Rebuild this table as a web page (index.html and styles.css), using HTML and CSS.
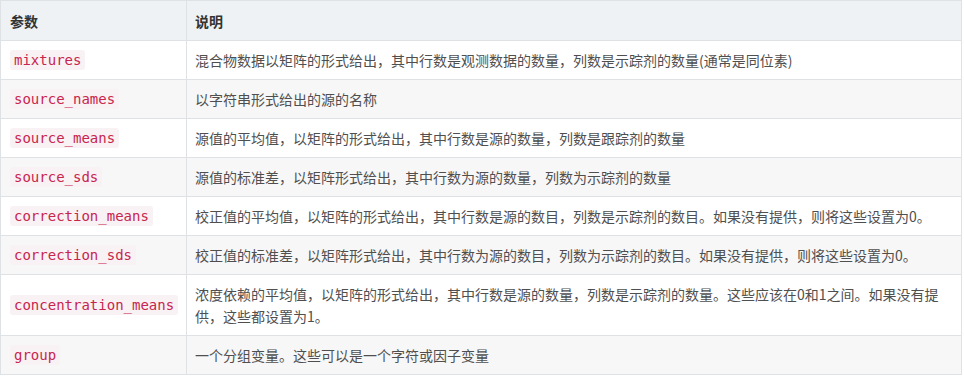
FILE: index.html
```html
<!DOCTYPE html>
<html lang="zh-CN">
<head>
<meta charset="utf-8">
<link rel="stylesheet" href="styles.css">
</head>
<body>
<table class="params">
  <colgroup><col class="c1"><col class="c2"></colgroup>
  <thead>
    <tr><th>参数</th><th>说明</th></tr>
  </thead>
  <tbody>
    <tr><td><code>mixtures</code></td><td>混合物数据以矩阵的形式给出，其中行数是观测数据的数量，列数是示踪剂的数量(通常是同位素)</td></tr>
    <tr><td><code>source_names</code></td><td>以字符串形式给出的源的名称</td></tr>
    <tr><td><code>source_means</code></td><td>源值的平均值，以矩阵的形式给出，其中行数是源的数量，列数是跟踪剂的数量</td></tr>
    <tr><td><code>source_sds</code></td><td>源值的标准差，以矩阵形式给出，其中行数为源的数量，列数为示踪剂的数量</td></tr>
    <tr><td><code>correction_means</code></td><td>校正值的平均值，以矩阵的形式给出，其中行数是源的数目，列数是示踪剂的数目。如果没有提供，则将这些设置为0。</td></tr>
    <tr><td><code>correction_sds</code></td><td>校正值的标准差，以矩阵形式给出，其中行数为源的数目，列数为示踪剂的数目。如果没有提供，则将这些设置为0。</td></tr>
    <tr><td><code>concentration_means</code></td><td>浓度依赖的平均值，以矩阵的形式给出，其中行数是源的数量，列数是示踪剂的数量。这些应该在0和1之间。如果没有提供，这些都设置为1。</td></tr>
    <tr><td><code>group</code></td><td>一个分组变量。这些可以是一个字符或因子变量</td></tr>
  </tbody>
</table>
</body>
</html>
```
FILE: styles.css
```css
html, body {
  margin: 0;
  padding: 0;
  background: #fff;
}
body {
  font-family: "Noto Sans CJK SC", "Microsoft YaHei", "Noto Sans", sans-serif;
  font-size: 14px;
  line-height: 22px;
  color: #4f4f4f;
}
.params {
  border-collapse: collapse;
  table-layout: fixed;
  width: 962px;
}
.c1 { width: 186px; }
.params th,
.params td {
  border: 1px solid #dfe2e5;
  padding: 8px 8px;
  height: 22px;
  text-align: left;
  vertical-align: middle;
  box-sizing: content-box;
}
.params th {
  background: #eff2f5;
  color: #333;
  font-weight: bold;
  padding-top: 9px;
}
.params th:first-child,
.params td:first-child {
  padding-left: 9px;
}
.params tbody tr:nth-child(even) td {
  background: #f7f7f7;
}
.params code {
  display: inline-block;
  vertical-align: top;
  margin-top: 1px;
  font-family: "DejaVu Sans Mono", "Liberation Mono", monospace;
  font-size: 14px;
  line-height: 16px;
  color: #c7254e;
  background: #f9f2f4;
  padding: 2px 4px;
  border-radius: 3px;
}
```
